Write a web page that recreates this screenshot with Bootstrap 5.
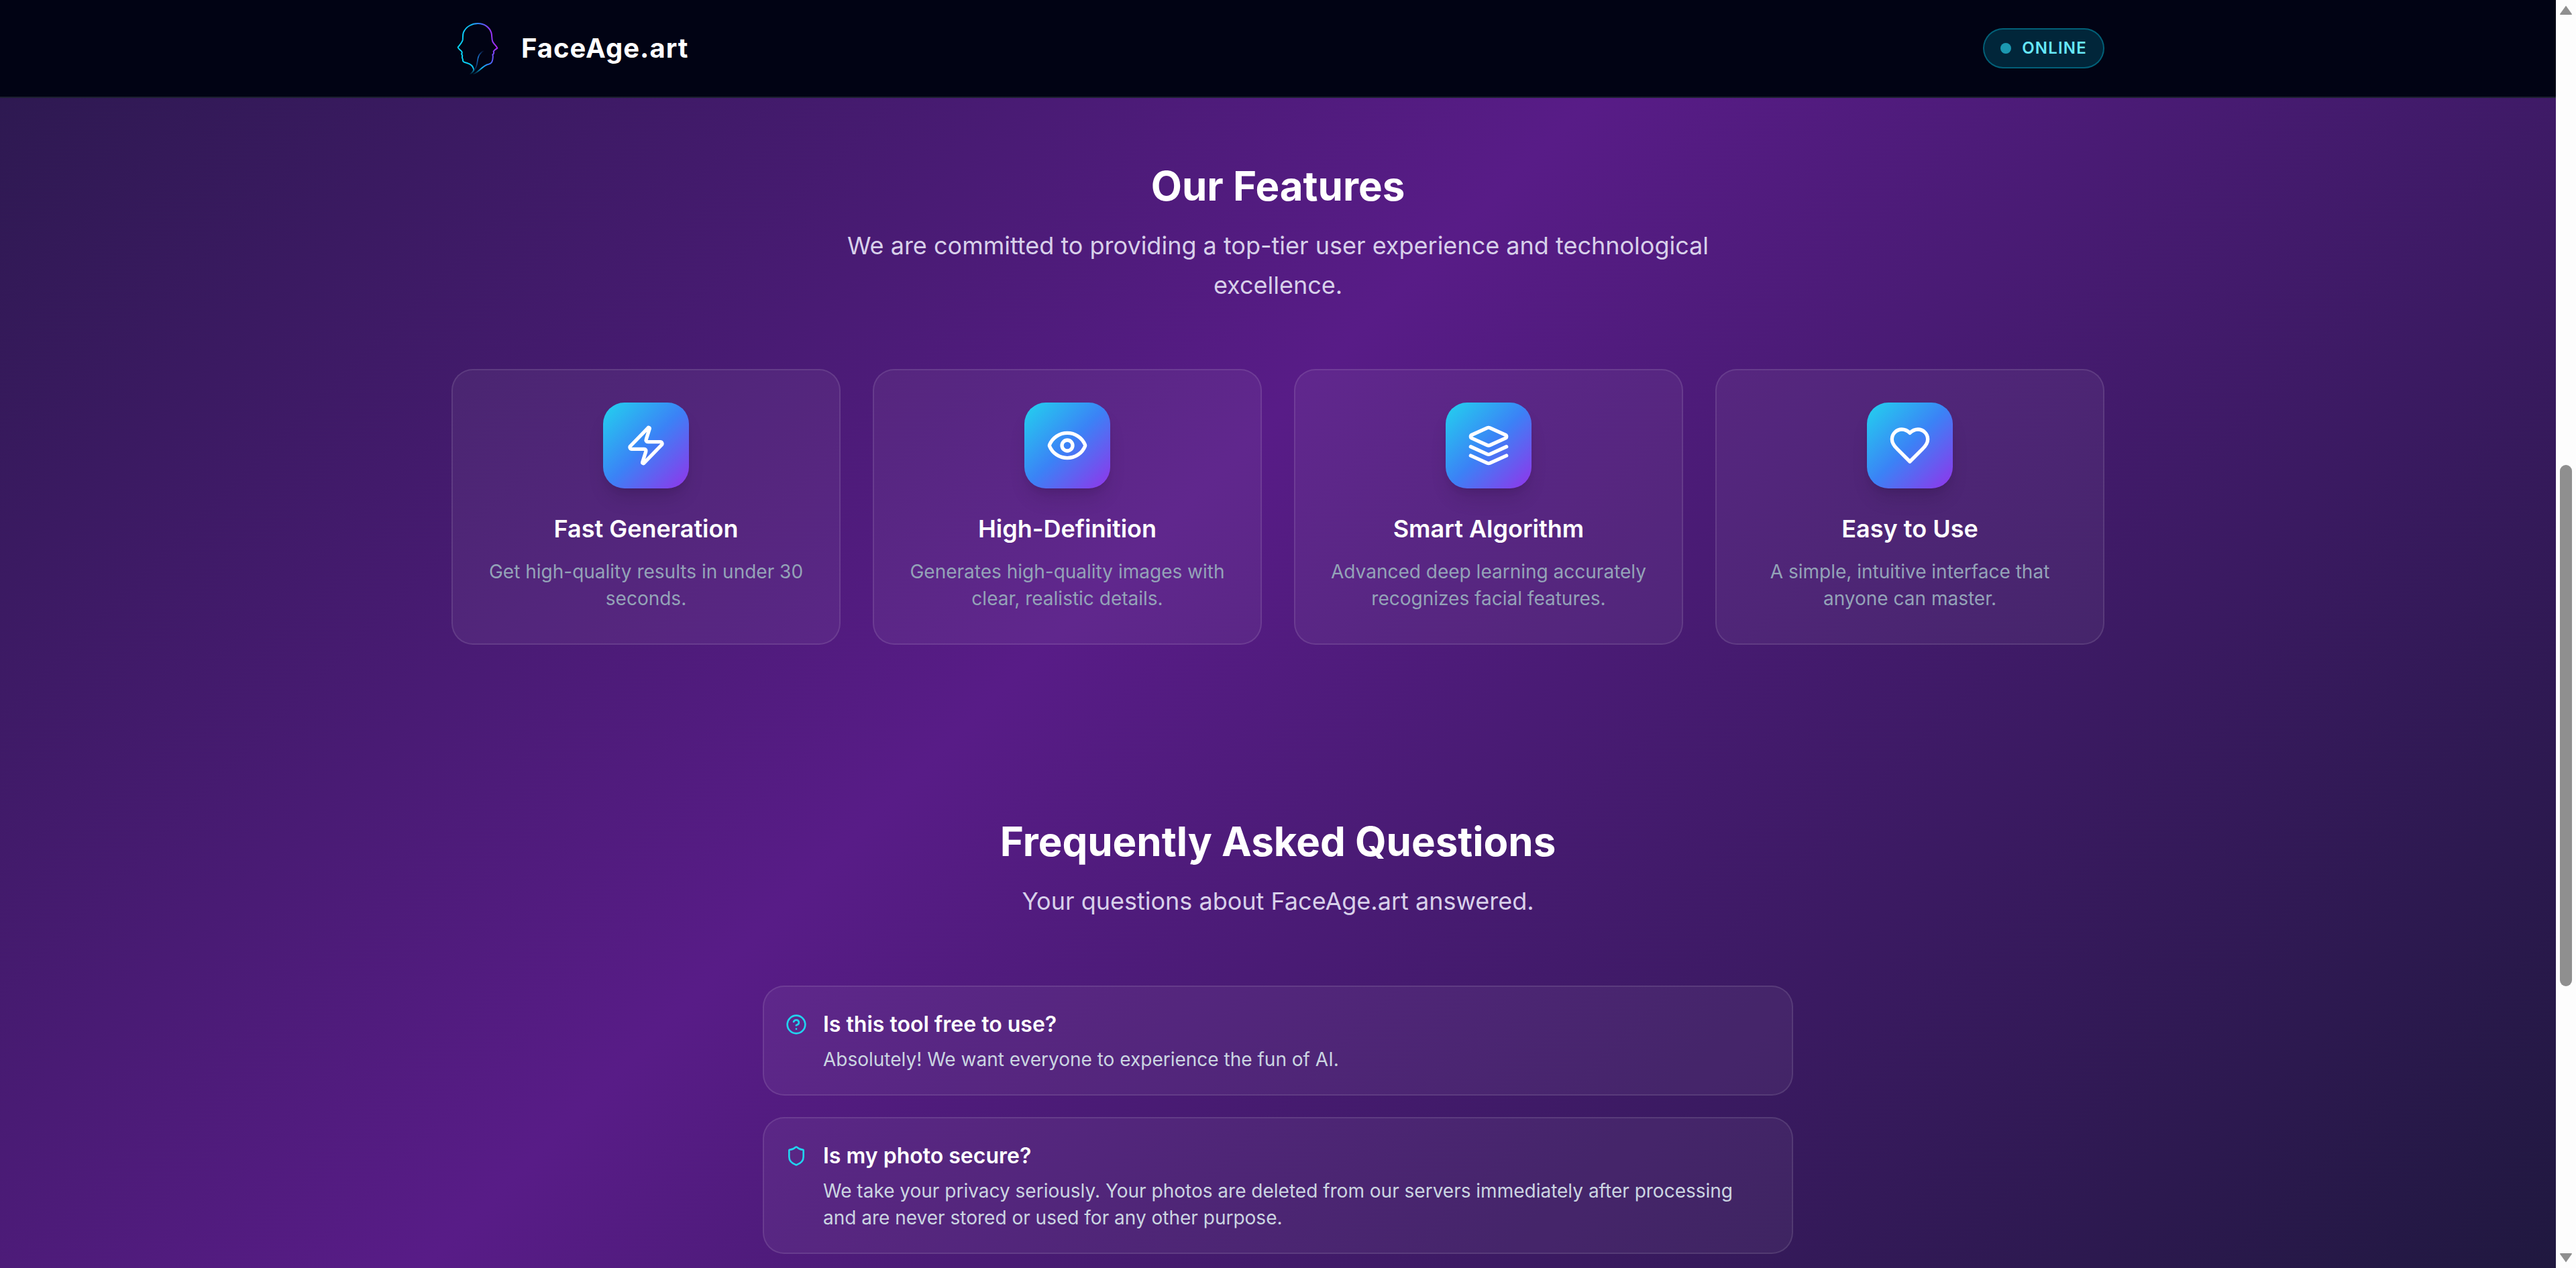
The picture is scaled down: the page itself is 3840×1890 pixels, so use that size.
<!DOCTYPE html>
<html lang="en">
<head>
  <meta charset="UTF-8">
  <title>FaceAge.art</title>
  <meta name="viewport" content="width=device-width, initial-scale=1">
  <link href="https://cdn.jsdelivr.net/npm/bootstrap@5.3.3/dist/css/bootstrap.min.css" rel="stylesheet">
  <style>
    html, body {
      height: 100%;
      overflow: hidden;
    }
    body {
      font-family: "Inter", "Liberation Sans", sans-serif;
      background: #fdfdfd;
      color: #fff;
    }
    .app-shell {
      height: 1890px;
    }
    .page-main {
      width: 3810px;
      height: 1890px;
      overflow: hidden;
      background-image: linear-gradient(135deg, #0f172a 0%, #581c87 50%, #0f172a 100%);
      background-size: 3810px 4450px;
      background-position: 0 -1610px;
    }
    .top-bar {
      height: 146px;
      background: #010314;
      border-bottom: 2px solid #1c2030;
      padding: 0;
    }
    .wrap {
      width: 2560px;
      padding: 0 48px;
      margin: 0 auto;
    }
    .logo-mark {
      width: 80px;
      height: 80px;
    }
    .logo-text {
      font-size: 40px;
      line-height: 56px;
      font-weight: 700;
      letter-spacing: 1px;
      color: #fff;
      padding: 0;
      margin: 0;
    }
    .status-pill {
      height: 60px;
      padding: 0 24px;
      gap: 16px;
      border: 2px solid rgba(6, 182, 212, .4);
      background: rgba(6, 182, 212, .2);
      border-radius: 30px;
      color: #67e8f9;
      font-size: 24px;
      font-weight: 600;
      letter-spacing: 1.2px;
    }
    .status-dot {
      width: 16px;
      height: 16px;
      border-radius: 50%;
      background: #1b98b0;
    }
    .sect-title {
      font-size: 60px;
      line-height: 72px;
      font-weight: 700;
      margin: 0 0 24px;
      color: #fff;
    }
    .sect-sub {
      font-size: 36px;
      line-height: 58.5px;
      color: #d8d0ea;
      width: 1344px;
      margin: 0 auto 96px;
    }
    .sect-features {
      padding-top: 95px;
    }
    .sect-faq {
      padding-top: 257px;
    }
    .feat-grid {
      display: grid;
      grid-template-columns: repeat(4, 580px);
      gap: 48px;
    }
    .feat-card {
      height: 411px;
      padding: 48px;
      background: rgba(255, 255, 255, .05);
      border: 2px solid rgba(255, 255, 255, .1);
      border-radius: 32px;
      color: #fff;
    }
    .feat-icon {
      width: 128px;
      height: 128px;
      border-radius: 32px;
      background: linear-gradient(135deg, #22d3ee, #3b82f6, #9333ea);
      box-shadow: 0 20px 30px -6px rgba(0, 0, 0, .12), 0 8px 12px -6px rgba(0, 0, 0, .1);
      margin: 0 auto 32px;
    }
    .feat-icon svg {
      width: 64px;
      height: 64px;
      fill: none;
      stroke: #fff;
      stroke-width: 2;
      stroke-linecap: round;
      stroke-linejoin: round;
    }
    .feat-name {
      font-size: 36px;
      line-height: 56px;
      font-weight: 600;
      margin: 0 0 16px;
      color: #fff;
    }
    .feat-desc {
      font-size: 28px;
      line-height: 40px;
      color: #94a3b8;
      margin: 0;
    }
    .faq-list {
      width: 1536px;
      margin: 0 auto;
      gap: 32px;
    }
    .faq-item {
      padding: 32px;
      gap: 24px;
      background: rgba(255, 255, 255, .05);
      border: 2px solid rgba(255, 255, 255, .1);
      border-radius: 32px;
    }
    .faq-icon {
      flex: 0 0 32px;
      width: 32px;
      height: 32px;
      margin-top: 8px;
      fill: none;
      stroke: #22d3ee;
      stroke-width: 2;
      stroke-linecap: round;
      stroke-linejoin: round;
    }
    .faq-q {
      font-size: 32px;
      line-height: 48px;
      font-weight: 600;
      margin: 0 0 8px;
      color: #fff;
    }
    .faq-a {
      font-size: 28px;
      line-height: 40px;
      color: #cbd5e1;
      margin: 0;
    }
    .fake-scroll {
      width: 30px;
      height: 1890px;
      background: #fdfdfd;
    }
    .scroll-arrow {
      width: 30px;
      height: 30px;
    }
    .scroll-arrow svg {
      display: block;
      width: 30px;
      height: 30px;
      fill: #8f8f8f;
    }
    .scroll-track {
      flex: 1 1 auto;
      padding: 663px 6px 0;
    }
    .scroll-thumb {
      height: 777px;
      border-radius: 9px;
      background: #8f8f8f;
    }
  </style>
</head>
<body>

  <div class="app-shell d-flex">
    <main class="page-main">

      <!-- Top bar -->
      <nav class="navbar top-bar">
        <div class="wrap d-flex align-items-center justify-content-between">
          <a class="navbar-brand logo-text d-flex align-items-center gap-4" href="#">
            <svg class="logo-mark" viewBox="0 0 240 240" fill="none">
              <defs>
                <linearGradient id="headGrad" gradientUnits="userSpaceOnUse" x1="30" y1="130" x2="200" y2="90">
                  <stop offset="0" stop-color="#06d8f6"/>
                  <stop offset=".5" stop-color="#14b4f2"/>
                  <stop offset=".72" stop-color="#3f6ff5"/>
                  <stop offset="1" stop-color="#b41ff5"/>
                </linearGradient>
                <linearGradient id="fadeGrad" gradientUnits="userSpaceOnUse" x1="0" y1="208" x2="0" y2="238">
                  <stop offset="0" stop-color="#fff"/>
                  <stop offset="1" stop-color="#000"/>
                </linearGradient>
                <linearGradient id="strandFade" gradientUnits="userSpaceOnUse" x1="146" y1="130" x2="98" y2="228">
                  <stop offset="0" stop-color="#1d6fd8" stop-opacity="0"/>
                  <stop offset=".35" stop-color="#1d78d8"/>
                  <stop offset="1" stop-color="#1d78d8" stop-opacity="0"/>
                </linearGradient>
                <mask id="headFade" maskUnits="userSpaceOnUse" x="0" y="0" width="240" height="240">
                  <rect x="0" y="0" width="240" height="240" fill="url(#fadeGrad)"/>
                </mask>
              </defs>
              <g mask="url(#headFade)" stroke="url(#headGrad)" stroke-width="6" stroke-linecap="round" stroke-linejoin="round">
                <path d="M84 236 C94 228 102 220 99 212 C95 198 84 190 70 186 C60 183 50 182 51 174 C52 168 46 163 48 157 C51 153 47 149 45 145 C49 140 48 136 43 131 C38 127 30 120 29 115 C36 106 46 96 50 84 C52 72 49 60 54 48 C66 22 92 9 118 9 C148 9 170 26 178 50 C182 62 179 76 184 90 C190 102 202 110 205 119 C199 124 190 128 188 134 C191 140 188 146 184 149 C187 155 185 162 184 170 C182 180 180 188 166 191 C150 194 138 206 126 217 C118 224 108 232 98 236"/>
              </g>
              <path d="M146 130 C124 140 118 158 116 178 C114 198 108 212 98 228" stroke="url(#strandFade)" stroke-width="5" stroke-linecap="round"/>
            </svg>
            FaceAge.art
          </a>
          <div class="status-pill d-flex align-items-center">
            <span class="status-dot"></span>
            <span>ONLINE</span>
          </div>
        </div>
      </nav>

      <!-- Features -->
      <section class="sect-features">
        <div class="wrap">
          <div class="text-center">
            <h2 class="sect-title">Our Features</h2>
            <p class="sect-sub">We are committed to providing a top-tier user experience and technological excellence.</p>
          </div>
          <div class="feat-grid">
            <div class="feat-card text-center">
              <div class="feat-icon d-flex align-items-center justify-content-center">
                <svg viewBox="0 0 24 24"><path d="M4 14a1 1 0 0 1-.78-1.63l9.9-10.2a.5.5 0 0 1 .86.46l-1.92 6.02A1 1 0 0 0 13 10h7a1 1 0 0 1 .78 1.63l-9.9 10.2a.5.5 0 0 1-.86-.46l1.92-6.02A1 1 0 0 0 11 14z"/></svg>
              </div>
              <h3 class="feat-name">Fast Generation</h3>
              <p class="feat-desc">Get high-quality results in under 30 seconds.</p>
            </div>
            <div class="feat-card text-center">
              <div class="feat-icon d-flex align-items-center justify-content-center">
                <svg viewBox="0 0 24 24"><path d="M2.062 12.348a1 1 0 0 1 0-.696 10.75 10.75 0 0 1 19.876 0 1 1 0 0 1 0 .696 10.75 10.75 0 0 1-19.876 0"/><circle cx="12" cy="12" r="3"/></svg>
              </div>
              <h3 class="feat-name">High-Definition</h3>
              <p class="feat-desc">Generates high-quality images with clear, realistic details.</p>
            </div>
            <div class="feat-card text-center">
              <div class="feat-icon d-flex align-items-center justify-content-center">
                <svg viewBox="0 0 24 24"><path d="m12.83 2.18a2 2 0 0 0-1.66 0L2.6 6.08a1 1 0 0 0 0 1.83l8.58 3.91a2 2 0 0 0 1.66 0l8.58-3.9a1 1 0 0 0 0-1.83Z"/><path d="m22 17.65-9.17 4.16a2 2 0 0 1-1.66 0L2 17.65"/><path d="m22 12.65-9.17 4.16a2 2 0 0 1-1.66 0L2 12.65"/></svg>
              </div>
              <h3 class="feat-name">Smart Algorithm</h3>
              <p class="feat-desc">Advanced deep learning accurately recognizes facial features.</p>
            </div>
            <div class="feat-card text-center">
              <div class="feat-icon d-flex align-items-center justify-content-center">
                <svg viewBox="0 0 24 24"><path d="M19 14c1.49-1.46 3-3.21 3-5.5A5.5 5.5 0 0 0 16.5 3c-1.76 0-3 .5-4.5 2-1.5-1.5-2.74-2-4.5-2A5.5 5.5 0 0 0 2 8.5c0 2.3 1.5 4.05 3 5.5l7 7Z"/></svg>
              </div>
              <h3 class="feat-name">Easy to Use</h3>
              <p class="feat-desc">A simple, intuitive interface that anyone can master.</p>
            </div>
          </div>
        </div>
      </section>

      <!-- FAQ -->
      <section class="sect-faq">
        <div class="wrap">
          <div class="text-center">
            <h2 class="sect-title">Frequently Asked Questions</h2>
            <p class="sect-sub">Your questions about FaceAge.art answered.</p>
          </div>
          <div class="faq-list d-flex flex-column">
            <div class="faq-item d-flex">
              <svg class="faq-icon" viewBox="0 0 24 24"><circle cx="12" cy="12" r="10"/><path d="M9.09 9a3 3 0 0 1 5.83 1c0 2-3 3-3 3"/><path d="M12 17h.01"/></svg>
              <div>
                <h4 class="faq-q">Is this tool free to use?</h4>
                <p class="faq-a">Absolutely! We want everyone to experience the fun of AI.</p>
              </div>
            </div>
            <div class="faq-item d-flex">
              <svg class="faq-icon" viewBox="0 0 24 24"><path d="M20 13c0 5-3.5 7.5-7.66 8.95a1 1 0 0 1-.67-.01C7.5 20.5 4 18 4 13V6a1 1 0 0 1 1-1c2 0 4.5-1.2 6.24-2.72a1.17 1.17 0 0 1 1.52 0C14.51 3.81 17 5 19 5a1 1 0 0 1 1 1z"/></svg>
              <div>
                <h4 class="faq-q">Is my photo secure?</h4>
                <p class="faq-a">We take your privacy seriously. Your photos are deleted from our servers immediately after processing and are never stored or used for any other purpose.</p>
              </div>
            </div>
          </div>
        </div>
      </section>
    </main>

    <!-- Window scrollbar -->
    <div class="fake-scroll d-flex flex-column">
      <div class="scroll-arrow"><svg viewBox="0 0 30 30"><path d="M15 8.5 L24 21 Q24 22 23 22 L7 22 Q6 22 6 21 Z"/></svg></div>
      <div class="scroll-track"><div class="scroll-thumb"></div></div>
      <div class="scroll-arrow"><svg viewBox="0 0 30 30"><path d="M15 21.5 L24 9 Q24 8 23 8 L7 8 Q6 8 6 9 Z"/></svg></div>
    </div>
  </div>

  <script src="https://cdn.jsdelivr.net/npm/bootstrap@5.3.3/dist/js/bootstrap.bundle.min.js"></script>
</body>
</html>
